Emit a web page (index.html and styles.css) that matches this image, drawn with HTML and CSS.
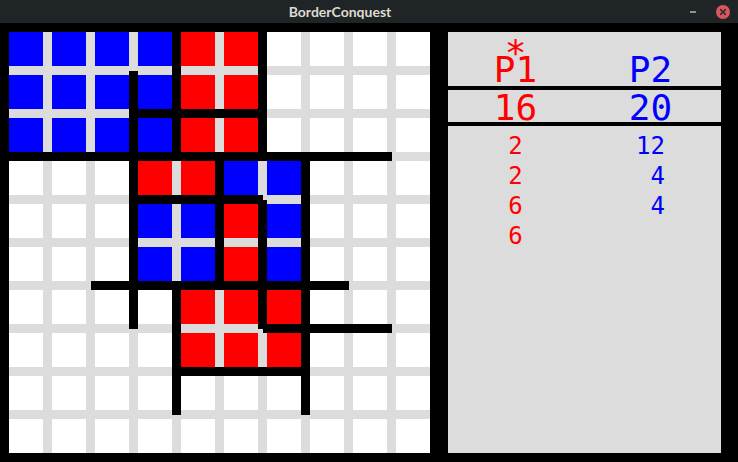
FILE: index.html
```html
<!DOCTYPE html>
<html>
<head>
<meta charset="utf-8">
<title>BorderConquest</title>
<link rel="stylesheet" href="styles.css">
</head>
<body>
<div class="window">
  <header class="titlebar">
    <div class="title">BorderConquest</div>
    <div class="controls">
      <span class="minimize"></span>
      <svg class="close" width="14" height="14" viewBox="0 0 14 14">
        <circle cx="7" cy="7" r="7" fill="#d9585e"/>
        <path d="M4.6 4.6 L9.4 9.4 M9.4 4.6 L4.6 9.4" stroke="#3b2a2c" stroke-width="1.6" stroke-linecap="round"/>
      </svg>
    </div>
  </header>
  <main class="content">
    <div class="board">
      <div class="c b"></div><div class="c b"></div><div class="c b"></div><div class="c b"></div><div class="c r"></div><div class="c r"></div><div class="c"></div><div class="c"></div><div class="c"></div><div class="c"></div>
      <div class="c b"></div><div class="c b"></div><div class="c b"></div><div class="c b"></div><div class="c r"></div><div class="c r"></div><div class="c"></div><div class="c"></div><div class="c"></div><div class="c"></div>
      <div class="c b"></div><div class="c b"></div><div class="c b"></div><div class="c b"></div><div class="c r"></div><div class="c r"></div><div class="c"></div><div class="c"></div><div class="c"></div><div class="c"></div>
      <div class="c"></div><div class="c"></div><div class="c"></div><div class="c r"></div><div class="c r"></div><div class="c b"></div><div class="c b"></div><div class="c"></div><div class="c"></div><div class="c"></div>
      <div class="c"></div><div class="c"></div><div class="c"></div><div class="c b"></div><div class="c b"></div><div class="c r"></div><div class="c b"></div><div class="c"></div><div class="c"></div><div class="c"></div>
      <div class="c"></div><div class="c"></div><div class="c"></div><div class="c b"></div><div class="c b"></div><div class="c r"></div><div class="c b"></div><div class="c"></div><div class="c"></div><div class="c"></div>
      <div class="c"></div><div class="c"></div><div class="c"></div><div class="c"></div><div class="c r"></div><div class="c r"></div><div class="c r"></div><div class="c"></div><div class="c"></div><div class="c"></div>
      <div class="c"></div><div class="c"></div><div class="c"></div><div class="c"></div><div class="c r"></div><div class="c r"></div><div class="c r"></div><div class="c"></div><div class="c"></div><div class="c"></div>
      <div class="c"></div><div class="c"></div><div class="c"></div><div class="c"></div><div class="c"></div><div class="c"></div><div class="c"></div><div class="c"></div><div class="c"></div><div class="c"></div>
      <div class="c"></div><div class="c"></div><div class="c"></div><div class="c"></div><div class="c"></div><div class="c"></div><div class="c"></div><div class="c"></div><div class="c"></div><div class="c"></div>
      <svg class="walls" width="421" height="421" viewBox="0 0 421 421">
        <g transform="translate(-4.5 -4.5)" stroke="#000" stroke-width="9" stroke-linecap="butt" fill="none">
          <line x1="0" y1="129" x2="387" y2="129"/>
          <line x1="129" y1="43" x2="129" y2="301"/>
          <line x1="129" y1="86" x2="258" y2="86"/>
          <line x1="172" y1="0" x2="172" y2="129"/>
          <line x1="258" y1="0" x2="258" y2="129"/>
          <line x1="129" y1="172" x2="258" y2="172"/>
          <line x1="215" y1="129" x2="215" y2="258"/>
          <line x1="258" y1="172" x2="258" y2="301"/>
          <line x1="258" y1="301" x2="387" y2="301"/>
          <line x1="301" y1="129" x2="301" y2="387"/>
          <line x1="86" y1="258" x2="344" y2="258"/>
          <line x1="172" y1="258" x2="172" y2="387"/>
          <line x1="172" y1="344" x2="301" y2="344"/>
        </g>
      </svg>
    </div>
    <aside class="panel">
      <div class="row head">
        <div class="cell red"><span class="turn">*</span>P1</div>
        <div class="cell blue">P2</div>
      </div>
      <div class="row score">
        <div class="cell red">16</div>
        <div class="cell blue">20</div>
      </div>
      <div class="row list">
        <div class="col red">
          <div class="item">2</div>
          <div class="item">2</div>
          <div class="item">6</div>
          <div class="item">6</div>
        </div>
        <div class="col blue">
          <div class="item">12</div>
          <div class="item"> 4</div>
          <div class="item"> 4</div>
        </div>
      </div>
    </aside>
  </main>
</div>
</body>
</html>
```
FILE: styles.css
```css
html, body {
  margin: 0;
  padding: 0;
  background: #000;
}

.window {
  width: 738px;
  height: 462px;
  overflow: hidden;
  background: #000;
}

.titlebar {
  height: 23px;
  background: #1f2426;
  display: flex;
  align-items: center;
}

.title {
  flex: 1;
  text-align: center;
  font-family: Lato, "Noto Sans", sans-serif;
  font-weight: 700;
  font-size: 14px;
  line-height: 23px;
  color: #dfdbd2;
}

.controls {
  width: 58px;
  box-sizing: border-box;
  padding: 0 8px 0 10px;
  display: flex;
  align-items: center;
  gap: 20px;
}

.minimize {
  display: block;
  width: 6px;
  height: 2px;
  background: #8d9194;
}

.close {
  display: block;
}

.content {
  display: flex;
  padding: 9px 17px 9px 9px;
  gap: 18px;
  height: 439px;
  box-sizing: border-box;
}

.board {
  position: relative;
  width: 421px;
  height: 421px;
  background: #dcdcdc;
  display: grid;
  grid-template-columns: repeat(10, 34px);
  grid-template-rows: repeat(10, 34px);
  gap: 9px;
}

.c {
  background: #ffffff;
}

.c.r {
  background: #ff0000;
}

.c.b {
  background: #0000ff;
}

.walls {
  position: absolute;
  left: 0;
  top: 0;
  overflow: visible;
  shape-rendering: crispEdges;
}

.panel {
  width: 273px;
  height: 421px;
  background: #dcdcdc;
  display: flex;
  flex-direction: column;
  font-family: "DejaVu Sans Mono", monospace;
}

.row {
  display: grid;
  grid-template-columns: 135px 135px;
}

.cell {
  text-align: center;
  font-size: 36px;
}

.head {
  height: 54px;
  border-bottom: 4px solid #000;
}

.head .cell {
  position: relative;
  padding-top: 19px;
  line-height: 37px;
  height: 54px;
  box-sizing: border-box;
}

.turn {
  position: absolute;
  left: 0;
  right: 0;
  top: 3px;
  line-height: 36px;
  text-align: center;
}

.score {
  height: 32px;
  border-bottom: 4px solid #000;
}

.score .cell {
  line-height: 36px;
  height: 32px;
}

.list {
  flex: 1;
  padding-top: 5px;
  align-items: start;
}

.col {
  text-align: center;
  font-size: 24px;
  line-height: 30px;
}

.item {
  white-space: pre;
}

.red {
  color: #ff0000;
}

.blue {
  color: #0000ff;
}
```
